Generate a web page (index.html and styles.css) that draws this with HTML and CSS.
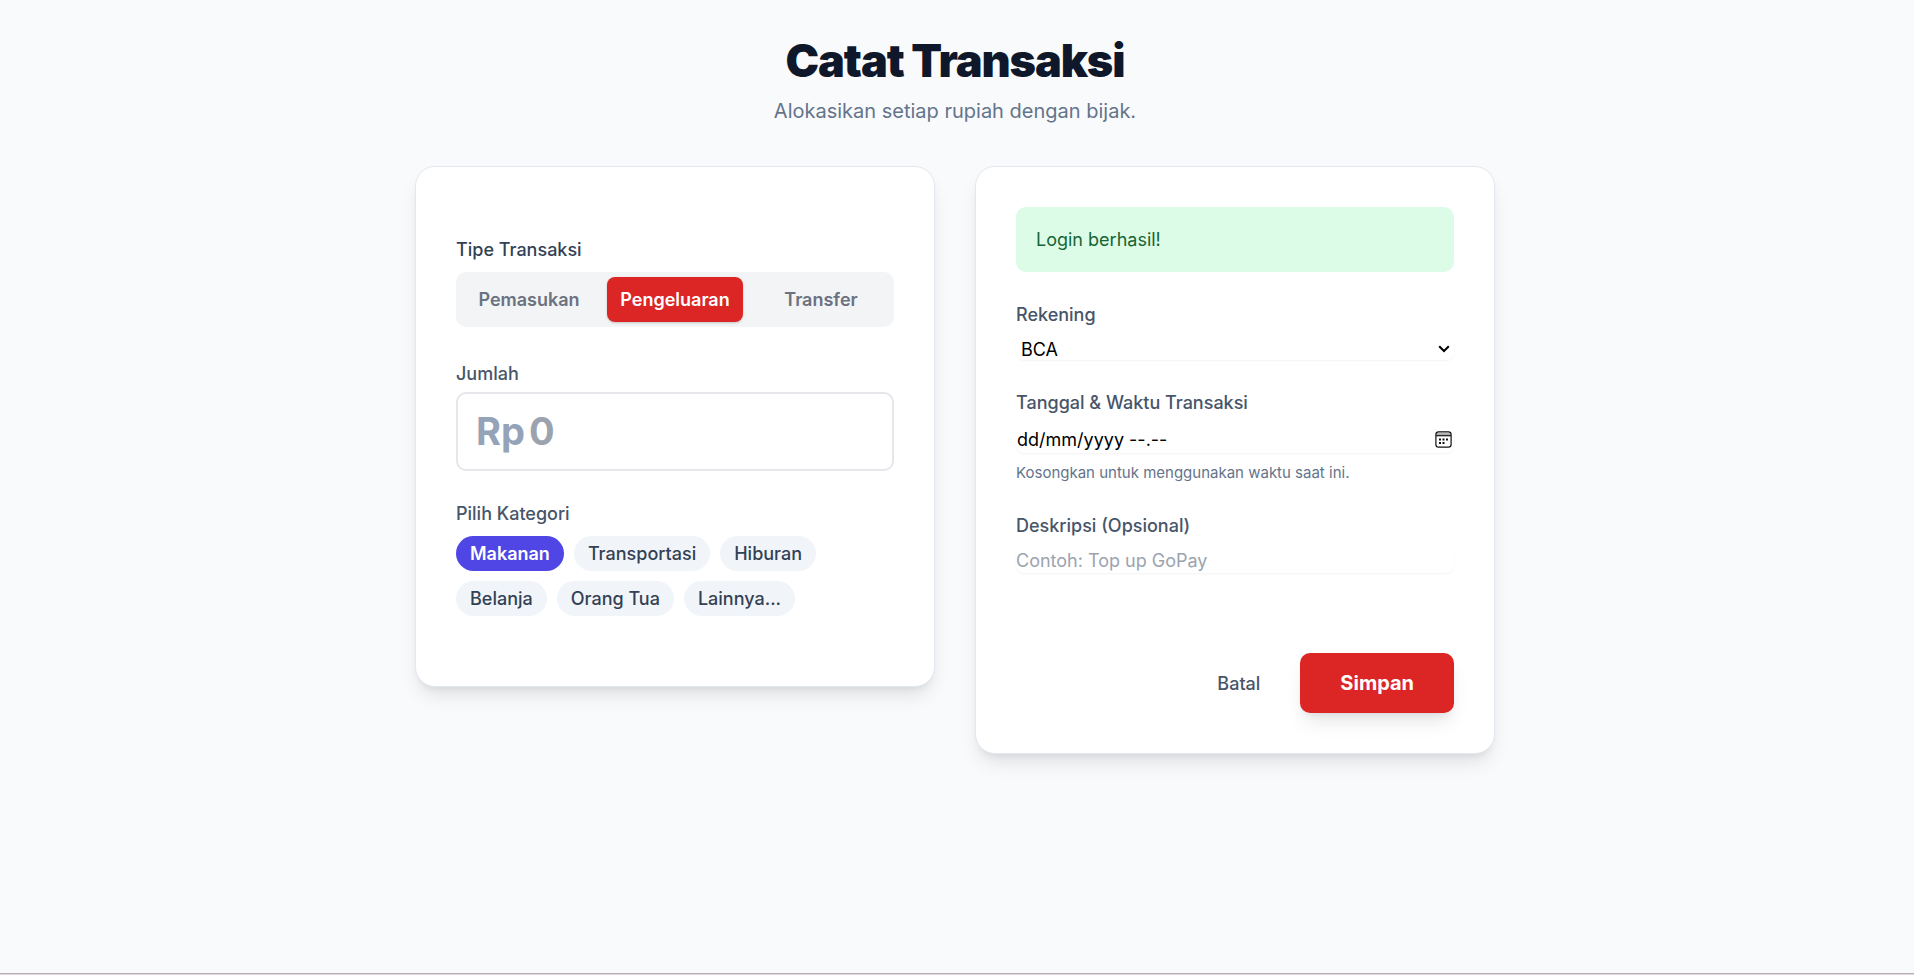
FILE: index.html
```html
<!DOCTYPE html>
<html lang="id">
<head>
<meta charset="utf-8">
<meta name="viewport" content="width=device-width, initial-scale=1">
<title>Catat Transaksi</title>
<link rel="stylesheet" href="styles.css">
</head>
<body>
<main class="page">
  <header class="page-header">
    <h1 class="page-title">Catat Transaksi</h1>
    <p class="page-subtitle">Alokasikan setiap rupiah dengan bijak.</p>
  </header>
  <form class="columns">
    <section class="card card-main">
      <div class="field" role="group" aria-labelledby="type-label">
        <span class="label label-strong" id="type-label">Tipe Transaksi</span>
        <div class="segments">
          <button type="button" class="segment">Pemasukan</button>
          <button type="button" class="segment segment-active" aria-pressed="true">Pengeluaran</button>
          <button type="button" class="segment">Transfer</button>
        </div>
      </div>
      <div class="field">
        <label class="label label-amount" for="amount">Jumlah</label>
        <div class="amount">
          <span class="amount-prefix">Rp</span>
          <input class="amount-input" id="amount" type="text" inputmode="numeric" placeholder="0">
        </div>
      </div>
      <div class="field" role="group" aria-labelledby="category-label">
        <span class="label" id="category-label">Pilih Kategori</span>
        <div class="chips">
          <button type="button" class="chip chip-active" aria-pressed="true">Makanan</button>
          <button type="button" class="chip">Transportasi</button>
          <button type="button" class="chip">Hiburan</button>
          <button type="button" class="chip">Belanja</button>
          <button type="button" class="chip">Orang Tua</button>
          <button type="button" class="chip">Lainnya...</button>
        </div>
      </div>
    </section>
    <section class="card card-details">
      <p class="alert" role="status">Login berhasil!</p>
      <div class="field">
        <label class="label" for="account">Rekening</label>
        <div class="control select">
          <select class="select-input" id="account"><option>BCA</option></select>
          <svg class="select-arrow" width="12" height="8" viewBox="0 0 12 8" fill="none" stroke="#000" stroke-width="2" aria-hidden="true">
            <path d="M1.200 1.200 6 6l4.800-4.800"/>
          </svg>
        </div>
      </div>
      <div class="field">
        <label class="label" for="date">Tanggal &amp; Waktu Transaksi</label>
        <div class="control date">
          <input class="date-input" id="date" type="text" value="dd/mm/yyyy --.--">
          <button type="button" class="date-button" aria-label="Pilih tanggal">
            <svg width="17" height="17" viewBox="0 0 17 17" fill="none" stroke="#111" stroke-width="1.2">
              <path d="M1.500 3.200h14" stroke="#aaa" stroke-width="2"/>
              <rect x="0.9" y="0.9" width="15.200" height="15.200" rx="2.6"/>
              <path d="M1 4.700h15"/>
              <path d="M4 8.500h2M7.500 8.500h2M11 8.500h2M4 12h2M7.500 12h2" stroke-width="1.800"/>
            </svg>
          </button>
        </div>
        <p class="hint">Kosongkan untuk menggunakan waktu saat ini.</p>
      </div>
      <div class="field">
        <label class="label" for="description">Deskripsi (Opsional)</label>
        <input class="control description" id="description" type="text" placeholder="Contoh: Top up GoPay">
      </div>
      <div class="actions">
        <a class="cancel" href="#">Batal</a>
        <button type="submit" class="submit">Simpan</button>
      </div>
    </section>
  </form>
</main>
<div class="bottom-edge"></div>
</body>
</html>
```
FILE: styles.css
```css
*,
*::before,
*::after {
  box-sizing: border-box;
}

body {
  margin: 0;
  min-height: 100vh;
  display: flex;
  flex-direction: column;
  background: #f9fafc;
  color: #334155;
  font-family: Inter, "Liberation Sans", sans-serif;
  font-size: 18px;
  line-height: 25px;
}

h1,
p {
  margin: 0;
}

button,
input,
select {
  margin: 0;
  padding: 0;
  border: 0;
  background: transparent;
  font: inherit;
}

button {
  cursor: pointer;
}

.page {
  flex: 1;
  width: 100%;
  max-width: 1124px;
  margin: 0 auto;
  padding: 36px 24px 40px 20px;
}

.page-header {
  text-align: center;
  margin-bottom: 40px;
}

.page-title {
  color: #0f172a;
  font-size: 45px;
  line-height: 50px;
  font-weight: 900;
  letter-spacing: -0.025em;
}

.page-subtitle {
  margin-top: 10px;
  color: #64748b;
  font-size: 20px;
  line-height: 30px;
}

.columns {
  display: grid;
  grid-template-columns: repeat(2, minmax(0, 1fr));
  align-items: start;
  gap: 40px;
}

.card {
  display: flex;
  flex-direction: column;
  gap: 30px;
  padding: 40px;
  border: 1px solid #e2e8f0;
  border-radius: 20px;
  background: #fff;
  box-shadow: 0 12px 19px -4px rgb(0 0 0 / 0.1), 0 5px 8px -5px rgb(0 0 0 / 0.1);
}

.card-main {
  padding-block: 70px;
}

.label {
  display: block;
  margin-bottom: 10px;
  color: #475569;
  font-weight: 500;
}

.label-strong {
  color: #334155;
}

.label-amount {
  margin-bottom: 6px;
  padding-top: 4px;
}

.segments {
  display: grid;
  grid-template-columns: repeat(3, minmax(0, 1fr));
  gap: 10px;
  padding: 5px;
  border-radius: 10px;
  background: #f3f4f6;
}

.segment {
  padding: 10px 0;
  border-radius: 8px;
  color: #6b7280;
  font-weight: 600;
}

.segment-active {
  background: #dc2626;
  color: #fff;
  box-shadow: 0 1px 3px rgb(0 0 0 / 0.1), 0 1px 2px rgb(0 0 0 / 0.1);
}

.amount {
  display: flex;
  gap: 4px;
  padding: 15px 18px;
  border: 2px solid #e5e7eb;
  border-radius: 10px;
  font-size: 38px;
  line-height: 45px;
  font-weight: 700;
}

.amount-prefix {
  color: #94a3b8;
}

.amount-input {
  flex: 1;
  min-width: 0;
  height: 45px;
}

.amount-input::placeholder,
.description::placeholder {
  color: #9ca3af;
  opacity: 1;
}

.chips {
  display: flex;
  flex-wrap: wrap;
  gap: 10px;
}

.chip {
  padding: 5px 14px;
  border-radius: 20px;
  background: #f1f5f9;
  color: #334155;
  font-weight: 500;
}

.chip-active {
  background: #4f46e5;
  color: #fff;
  font-weight: 600;
}

.alert {
  padding: 20px;
  border-radius: 10px;
  background: #dcfce7;
  color: #166534;
}

.control {
  display: block;
  width: 100%;
  border-radius: 8px;
  color: #000;
  box-shadow: 0 1px 2px rgb(0 0 0 / 0.05);
}

.select {
  display: grid;
  align-items: center;
}

.select-input {
  grid-area: 1 / 1;
  height: 23px;
  padding: 0 24px 0 5px;
  appearance: none;
  color: #000;
}

.select-arrow {
  grid-area: 1 / 1;
  justify-self: end;
  margin-right: 4px;
  pointer-events: none;
}

.date {
  display: flex;
  align-items: center;
  height: 28px;
}

.date-input {
  flex: 1;
  min-width: 0;
  padding-left: 1px;
}

.date-button {
  display: flex;
  margin-right: 2px;
}

.hint {
  margin-top: 10px;
  color: #64748b;
  font-size: 15px;
  line-height: 20px;
}

.description {
  height: 25px;
}

.actions {
  display: flex;
  justify-content: flex-end;
  align-items: center;
  gap: 40px;
  padding-top: 50px;
}

.cancel {
  color: #475569;
  font-weight: 500;
  text-decoration: none;
}

.submit {
  padding: 15px 40px;
  border-radius: 10px;
  background: #dc2626;
  color: #fff;
  font-size: 20px;
  line-height: 30px;
  font-weight: 700;
  box-shadow: 0 12px 19px -4px rgb(0 0 0 / 0.1), 0 5px 8px -5px rgb(0 0 0 / 0.1);
}

.bottom-edge {
  height: 2px;
  border-top: 1px solid #b8adb2;
  background: #e3d8dd;
}
```
